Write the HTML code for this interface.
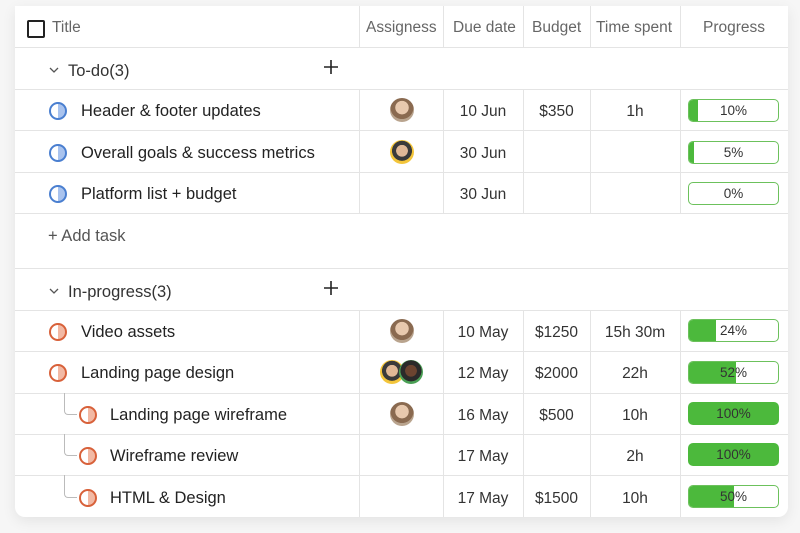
<!DOCTYPE html>
<html><head><style>
body{margin:0;width:800px;height:533px;background:#f6f6f6;font-family:"Liberation Sans",sans-serif;position:relative;overflow:hidden}
.card{position:absolute;left:15px;top:6px;width:773px;height:511px;background:#fff;border-radius:0 0 10px 10px;box-shadow:0 4px 14px rgba(0,0,0,.08);overflow:hidden}
.a{position:absolute}
.h{position:absolute;left:0;width:773px;height:1px;background:#e4e4e4}
.v{position:absolute;width:1px;background:#e4e4e4}
.t{position:absolute;font-size:16.5px;color:#222;white-space:nowrap;margin-top:2px}
.hd{position:absolute;top:13px;font-size:15.5px;color:#666}
.c{position:absolute;font-size:15.5px;color:#333;text-align:center;white-space:nowrap;margin-top:2px}
.ic{position:absolute;width:14px;height:14px;border-radius:50%;border:2px solid;margin-top:1px}
.bl{border-color:#4a7fd0;background:linear-gradient(90deg,#fff 50%,#a9c3ee 50%)}
.or{border-color:#d8613a;background:linear-gradient(90deg,#fff 50%,#f2b9a4 50%)}
.pb{position:absolute;left:673px;width:91px;height:23px;border:1.5px solid #6cc15c;border-radius:5px;box-sizing:border-box;overflow:hidden;background:#fff}
.pb i{position:absolute;left:0;top:0;bottom:0;background:#4cb93c}
.pb span{position:absolute;left:0;right:0;top:3px;text-align:center;font-size:13.5px;color:#333}
.av{position:absolute;width:24px;height:24px;border-radius:50%;background:radial-gradient(circle at 50% 40%,#e8c9ae 0 35%,#8a6a50 37% 60%,#b9a48e 62%)}
.tr{position:absolute;left:49px;width:12px;border-left:1px solid #bbb;border-bottom:1px solid #bbb;border-bottom-left-radius:4px}
.chev{position:absolute;left:34px;width:10px;height:10px}
</style></head><body>
<div class="card">
<div class="a" style="left:12px;top:14px;width:14px;height:14px;border:2px solid #222;border-radius:2px"></div>
<div class="hd" style="left:37px">Title</div>
<div class="hd" style="left:351px">Assigness</div>
<div class="hd" style="left:438px">Due date</div>
<div class="hd" style="left:517px">Budget</div>
<div class="hd" style="left:581px">Time spent</div>
<div class="hd" style="left:688px">Progress</div>
<div class="v" style="left:344px;top:0;height:41px"></div>
<div class="v" style="left:428px;top:0;height:41px"></div>
<div class="v" style="left:508px;top:0;height:41px"></div>
<div class="v" style="left:575px;top:0;height:41px"></div>
<div class="v" style="left:665px;top:0;height:41px"></div>

<div class="h" style="top:41px"></div>
<svg class="chev" style="top:59px" viewBox="0 0 10 10"><path d="M1 3 L5 7 L9 3" fill="none" stroke="#555" stroke-width="1.3"/></svg>
<div class="t" style="left:53px;top:54px;color:#333">To-do(3)</div>
<svg class="a" style="left:309px;top:54px" width="14" height="14" viewBox="0 0 14 14"><path d="M7 0V14M0 7H14" stroke="#222" stroke-width="1.6"/></svg>
<div class="h" style="top:83px"></div>

<div class="v" style="left:344px;top:83px;height:124px"></div>
<div class="v" style="left:428px;top:83px;height:124px"></div>
<div class="v" style="left:508px;top:83px;height:124px"></div>
<div class="v" style="left:575px;top:83px;height:124px"></div>
<div class="v" style="left:665px;top:83px;height:124px"></div>

<div class="ic bl" style="left:34px;top:95px"></div><div class="t" style="left:66px;top:94px">Header &amp; footer updates</div>
<div class="av" style="left:375px;top:92px"></div>
<div class="c" style="left:428px;width:80px;top:95px">10 Jun</div><div class="c" style="left:508px;width:67px;top:95px">$350</div><div class="c" style="left:575px;width:90px;top:95px">1h</div>
<div class="pb" style="top:93px"><i style="width:9px"></i><span>10%</span></div>
<div class="h" style="top:124px"></div>

<div class="ic bl" style="left:34px;top:137px"></div><div class="t" style="left:66px;top:136px">Overall goals &amp; success metrics</div>
<div class="av" style="left:375px;top:134px;background:radial-gradient(circle at 50% 45%,#e0b896 0 32%,#3a3a3a 34% 55%,#f3c53a 57%)"></div>
<div class="c" style="left:428px;width:80px;top:137px">30 Jun</div>
<div class="pb" style="top:135px"><i style="width:5px"></i><span>5%</span></div>
<div class="h" style="top:166px"></div>

<div class="ic bl" style="left:34px;top:178px"></div><div class="t" style="left:66px;top:177px">Platform list + budget</div>
<div class="c" style="left:428px;width:80px;top:178px">30 Jun</div>
<div class="pb" style="top:176px"><span>0%</span></div>
<div class="h" style="top:207px"></div>

<div class="t" style="left:33px;top:219px;color:#555">+ Add task</div>
<div class="h" style="top:262px"></div>
<svg class="chev" style="top:280px" viewBox="0 0 10 10"><path d="M1 3 L5 7 L9 3" fill="none" stroke="#555" stroke-width="1.3"/></svg>
<div class="t" style="left:53px;top:275px;color:#333">In-progress(3)</div>
<svg class="a" style="left:309px;top:275px" width="14" height="14" viewBox="0 0 14 14"><path d="M7 0V14M0 7H14" stroke="#222" stroke-width="1.6"/></svg>
<div class="h" style="top:304px"></div>

<div class="v" style="left:344px;top:304px;height:207px"></div>
<div class="v" style="left:428px;top:304px;height:207px"></div>
<div class="v" style="left:508px;top:304px;height:207px"></div>
<div class="v" style="left:575px;top:304px;height:207px"></div>
<div class="v" style="left:665px;top:304px;height:207px"></div>

<div class="ic or" style="left:34px;top:316px"></div><div class="t" style="left:66px;top:315px">Video assets</div>
<div class="av" style="left:375px;top:313px"></div>
<div class="c" style="left:428px;width:80px;top:316px">10 May</div><div class="c" style="left:508px;width:67px;top:316px">$1250</div><div class="c" style="left:575px;width:90px;top:316px">15h 30m</div>
<div class="pb" style="top:313px"><i style="width:27px"></i><span>24%</span></div>
<div class="h" style="top:345px"></div>

<div class="ic or" style="left:34px;top:357px"></div><div class="t" style="left:66px;top:356px">Landing page design</div>
<div class="av" style="left:365px;top:354px;background:radial-gradient(circle at 50% 45%,#e0b896 0 32%,#3a3a3a 34% 55%,#f3c53a 57%)"></div>
<div class="av" style="left:384px;top:354px;background:radial-gradient(circle at 50% 45%,#6b4430 0 32%,#2a2a2a 34% 58%,#4aa055 60%)"></div>
<div class="c" style="left:428px;width:80px;top:357px">12 May</div><div class="c" style="left:508px;width:67px;top:357px">$2000</div><div class="c" style="left:575px;width:90px;top:357px">22h</div>
<div class="pb" style="top:355px"><i style="width:47px"></i><span>52%</span></div>
<div class="h" style="top:387px"></div>

<div class="tr" style="top:387px;height:21px"></div>
<div class="ic or" style="left:64px;top:399px"></div><div class="t" style="left:95px;top:398px">Landing page wireframe</div>
<div class="av" style="left:375px;top:396px"></div>
<div class="c" style="left:428px;width:80px;top:399px">16 May</div><div class="c" style="left:508px;width:67px;top:399px">$500</div><div class="c" style="left:575px;width:90px;top:399px">10h</div>
<div class="pb" style="top:396px;background:#4cb93c;border-color:#4cb93c"><span>100%</span></div>
<div class="h" style="top:428px"></div>

<div class="tr" style="top:428px;height:21px"></div>
<div class="ic or" style="left:64px;top:440px"></div><div class="t" style="left:95px;top:439px">Wireframe review</div>
<div class="c" style="left:428px;width:80px;top:440px">17 May</div><div class="c" style="left:575px;width:90px;top:440px">2h</div>
<div class="pb" style="top:437px;background:#4cb93c;border-color:#4cb93c"><span>100%</span></div>
<div class="h" style="top:469px"></div>

<div class="tr" style="top:469px;height:22px"></div>
<div class="ic or" style="left:64px;top:482px"></div><div class="t" style="left:95px;top:481px">HTML &amp; Design</div>
<div class="c" style="left:428px;width:80px;top:482px">17 May</div><div class="c" style="left:508px;width:67px;top:482px">$1500</div><div class="c" style="left:575px;width:90px;top:482px">10h</div>
<div class="pb" style="top:479px"><i style="width:45px"></i><span>50%</span></div>
</div>
</body></html>
